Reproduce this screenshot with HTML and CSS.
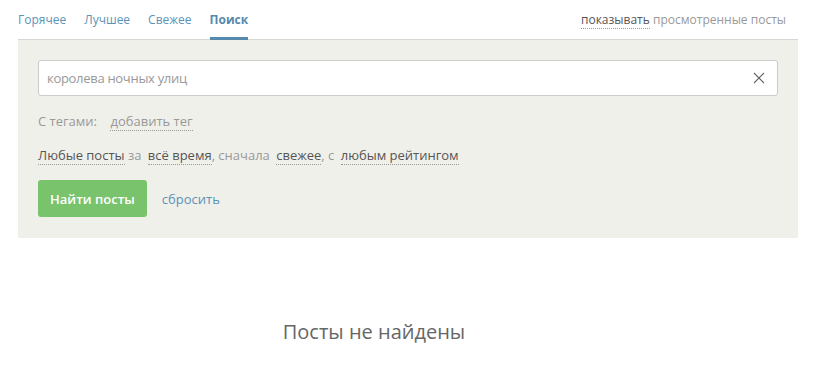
FILE: index.html
```html
<!DOCTYPE html>
<html lang="ru">
<head>
  <meta charset="UTF-8" />
  <title>Поиск</title>
  <link rel="stylesheet" href="styles.css">
</head>
<body>
  <div class="page">
    <div class="tabs">
      <nav class="tabs-list">
        <a class="tab">Горячее</a>
        <a class="tab">Лучшее</a>
        <a class="tab">Свежее</a>
        <a class="tab active">Поиск</a>
      </nav>
      <div class="viewed">
        <span class="dotted dark">показывать</span> просмотренные посты
      </div>
    </div>

    <div class="search-panel">
      <div class="search-input">
        <span class="query">королева ночных улиц</span>
        <svg class="clear" width="12" height="12" viewBox="0 0 12 12">
          <path d="M1 1 L11 11 M11 1 L1 11" stroke="#666" stroke-width="1.1" fill="none" />
        </svg>
      </div>

      <div class="tags-row">
        <span class="label">С тегами:</span>
        <span class="dotted">добавить тег</span>
      </div>

      <div class="filter-row">
        <span class="dotted dark">Любые посты</span> за
        <span class="dotted dark gap">всё время</span>, сначала
        <span class="dotted dark gap">свежее</span>, с
        <span class="dotted dark gap">любым рейтингом</span>
      </div>

      <div class="actions">
        <button class="btn-find">Найти посты</button>
        <a class="reset">сбросить</a>
      </div>
    </div>

    <div class="empty">Посты не найдены</div>
  </div>
</body>
</html>
```

FILE: styles.css
```css
* {
  box-sizing: border-box;
}

html, body {
  margin: 0;
  padding: 0;
  background: #fff;
  font-family: "Open Sans", sans-serif;
  font-size: 13px;
  color: #8a8a8a;
}

.page {
  width: 780px;
  margin-left: 18px;
}

.tabs {
  display: flex;
  justify-content: space-between;
  align-items: flex-start;
  height: 40px;
  border-bottom: 1px solid #d8d8d3;
  font-size: 12px;
}

.tabs-list {
  display: flex;
  gap: 18px;
}

.tab {
  color: #5b93b8;
  padding-top: 11px;
  height: 40px;
  line-height: 18px;
  border-bottom: 3px solid transparent;
}

.tab.active {
  font-weight: bold;
  color: #5589ae;
  border-bottom-color: #5589ae;
}

.viewed {
  padding-top: 11px;
  line-height: 18px;
  margin-right: 12px;
  color: #999;
}

.dotted {
  border-bottom: 1px dotted #999;
}

.dotted.gap {
  margin-left: 3px;
}

.dark {
  color: #555;
}

.search-panel {
  background: #f0f0eb;
  padding: 20px;
  height: 198px;
}

.search-input {
  display: flex;
  align-items: center;
  justify-content: space-between;
  height: 36px;
  background: #fff;
  border: 1px solid #ccc;
  border-radius: 3px;
  padding: 0 12px 0 8px;
  font-size: 13px;
  letter-spacing: -0.3px;
}

.query {
  color: #999;
}

.tags-row {
  margin-top: 16px;
  line-height: 18px;
  color: #999;
}

.label {
  margin-right: 10px;
}

.filter-row {
  margin-top: 16px;
  line-height: 18px;
  color: #999;
}

.actions {
  display: flex;
  align-items: center;
  gap: 15px;
  margin-top: 16px;
}

.btn-find {
  background: #79c36d;
  color: #fff;
  border: none;
  border-radius: 3px;
  height: 37px;
  padding: 0 12px;
  font-family: "Open Sans", sans-serif;
  font-size: 13px;
  font-weight: 600;
}

.reset {
  color: #5b93b8;
  font-size: 13px;
}

.empty {
  text-align: center;
  margin-top: 80px;
  font-size: 20px;
  color: #666;
  margin-right: 68px;
}
```
